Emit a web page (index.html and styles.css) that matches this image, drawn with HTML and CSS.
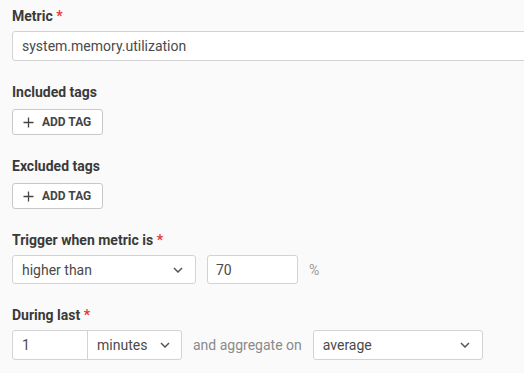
FILE: index.html
```html
<!DOCTYPE html>
<html lang="en">
<head>
  <meta charset="UTF-8">
  <title>Metric alert</title>
  <link rel="stylesheet" href="styles.css">
</head>
<body>
  <form class="alert-form">

    <div class="field">
      <label class="label">Metric <span class="req">*</span></label>
      <input class="input input-wide" type="text" value="system.memory.utilization">
    </div>

    <div class="field">
      <label class="label">Included tags</label>
      <button type="button" class="add-tag">
        <svg width="11" height="11" viewBox="0 0 11 11"><path d="M5.5 0.5v10M0.5 5.5h10" stroke="#444" stroke-width="1.3" fill="none"/></svg>
        ADD TAG
      </button>
    </div>

    <div class="field">
      <label class="label">Excluded tags</label>
      <button type="button" class="add-tag">
        <svg width="11" height="11" viewBox="0 0 11 11"><path d="M5.5 0.5v10M0.5 5.5h10" stroke="#444" stroke-width="1.3" fill="none"/></svg>
        ADD TAG
      </button>
    </div>

    <div class="field">
      <label class="label">Trigger when metric is <span class="req">*</span></label>
      <div class="row">
        <div class="select select-cond">
          <span>higher than</span>
          <svg class="chev" width="10" height="6" viewBox="0 0 10 6"><path d="M1 1l4 4 4-4" stroke="#555" stroke-width="1.5" fill="none"/></svg>
        </div>
        <input class="input input-num" type="text" value="70">
        <span class="unit">%</span>
      </div>
    </div>

    <div class="field">
      <label class="label">During last <span class="req">*</span></label>
      <div class="row">
        <div class="group">
          <input class="group-num" type="text" value="1">
          <div class="group-unit">
            <span>minutes</span>
            <svg class="chev" width="10" height="6" viewBox="0 0 10 6"><path d="M1 1l4 4 4-4" stroke="#555" stroke-width="1.5" fill="none"/></svg>
          </div>
        </div>
        <span class="hint">and aggregate on</span>
        <div class="select select-agg">
          <span>average</span>
          <svg class="chev" width="10" height="6" viewBox="0 0 10 6"><path d="M1 1l4 4 4-4" stroke="#555" stroke-width="1.5" fill="none"/></svg>
        </div>
      </div>
    </div>

  </form>
</body>
</html>
```

FILE: styles.css
```css
body {
  margin: 0;
  padding: 8px 12px 0;
  background: #fafafa;
  font-family: Roboto, "Liberation Sans", sans-serif;
  color: #333;
  overflow: hidden;
}

.field {
  display: flex;
  flex-direction: column;
  align-items: flex-start;
  margin-bottom: 23px;
}

.label {
  font-size: 14px;
  line-height: 16px;
  font-weight: 700;
  color: #3a3a3a;
  margin-bottom: 7px;
}

.req {
  color: #e53935;
}

.input {
  box-sizing: border-box;
  height: 30px;
  border: 1px solid #d3d3d3;
  border-radius: 3px;
  background: #fff;
  padding: 0 9px;
  font-family: inherit;
  font-size: 14px;
  color: #4a4a4a;
  outline: none;
}

.input-wide {
  width: 540px;
}

.add-tag {
  display: flex;
  align-items: center;
  gap: 8px;
  box-sizing: border-box;
  height: 26px;
  width: 91px;
  margin-top: 2px;
  padding: 0 10px;
  border: 1px solid #c8c8c8;
  border-radius: 3px;
  background: #fff;
  font-family: inherit;
  font-size: 12px;
  font-weight: 700;
  color: #444;
}

.row {
  display: flex;
  align-items: center;
}

.select {
  box-sizing: border-box;
  height: 29px;
  display: flex;
  align-items: center;
  justify-content: space-between;
  padding: 0 12px 0 9px;
  border: 1px solid #d3d3d3;
  border-radius: 3px;
  background: #fff;
  font-size: 14px;
  color: #4a4a4a;
}

.select-cond {
  width: 184px;
}

.select-agg {
  width: 170px;
  height: 30px;
}

.input-num {
  width: 91px;
  height: 29px;
  margin-left: 11px;
  padding-left: 8px;
}

.unit {
  margin-left: 11px;
  font-size: 14px;
  color: #9a9a9a;
}

.group {
  display: flex;
  box-sizing: border-box;
  width: 170px;
  height: 30px;
  border: 1px solid #d3d3d3;
  border-radius: 3px;
  background: #fff;
}

.group-num {
  box-sizing: border-box;
  width: 75px;
  border: none;
  border-right: 1px solid #d3d3d3;
  background: transparent;
  padding: 0 9px;
  font-family: inherit;
  font-size: 14px;
  color: #4a4a4a;
  outline: none;
}

.group-unit {
  flex: 1;
  display: flex;
  align-items: center;
  justify-content: space-between;
  padding: 0 11px 0 9px;
  font-size: 14px;
  color: #4a4a4a;
}

.hint {
  margin: 0 11px 0 11px;
  font-size: 14px;
  color: #8a8a8a;
}
```
